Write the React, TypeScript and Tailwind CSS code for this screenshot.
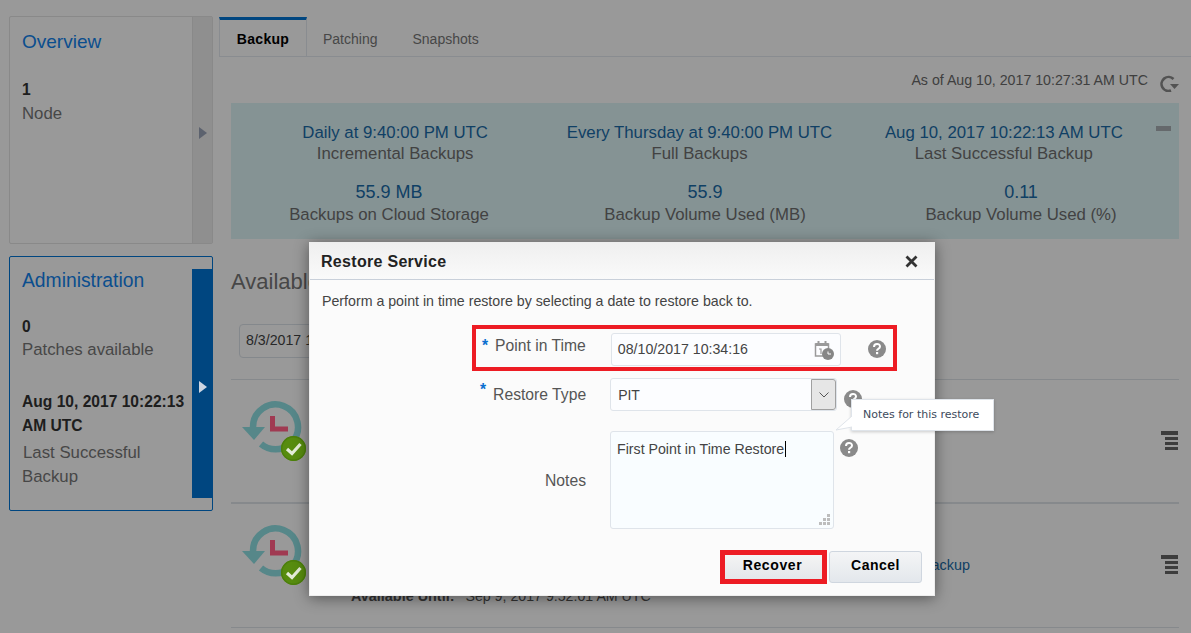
const arial = { fontFamily: '"Liberation Sans", Arial, sans-serif' };

function Help() {
  return (
    <svg width="18" height="18" viewBox="0 0 18 18" className="shrink-0">
      <circle cx="9" cy="9" r="9" fill="#8a8a8a" />
      <path d="M6 7c0-4 6-4 6-.6 0 2.300-3 2.300-3 4.300" fill="none" stroke="#fff" strokeWidth="2" />
      <rect x="8" y="12" width="2.200" height="2.200" fill="#fff" />
    </svg>
  );
}

function BackupIcon() {
  return (
    <svg width="66" height="66" viewBox="0 0 66 66" className="relative z-20 shrink-0">
      <path d="M13 28 A22.500 22.500 0 1 1 52 43.300" fill="none" stroke="#568789" strokeWidth="6.500" />
      <path d="M21 45 A22.500 22.500 0 0 0 50 45" fill="none" stroke="#568789" strokeWidth="6.500" />
      <path d="M2 28 H25 L14 41 Z" fill="#568789" />
      <path d="M32.500 17 V30 H48" fill="none" stroke="#a03a52" strokeWidth="5" />
      <circle cx="53.500" cy="49.500" r="12.500" fill="#578c0f" />
      <circle cx="53.500" cy="49.500" r="11.800" fill="none" stroke="#4c7f0c" strokeWidth="1.400" />
      <path d="M47 50 L52 54.500 L60.500 45" fill="none" stroke="#e4ecd8" strokeWidth="3.200" />
    </svg>
  );
}

function Menu() {
  return (
    <div className="flex w-[17px] flex-col items-end gap-[2px]">
      <div className="h-[4px] w-[17px] bg-[#666666]" />
      <div className="h-[3px] w-[13px] bg-[#666666]" />
      <div className="h-[3px] w-[13px] bg-[#666666]" />
      <div className="h-[3px] w-[13px] bg-[#666666]" />
    </div>
  );
}

function Stat({ top, sub, low }: { top: string; sub: string; low?: boolean }) {
  return (
    <div className="text-center text-[16.8px] leading-[21px]">
      <div className={low ? "text-[18px] text-[#1a6ba8]" : "text-[#1a6ba8]"}>{top}</div>
      <div className={low ? "mt-[1px] text-[#6f6f6f]" : "text-[#6f6f6f]"}>{sub}</div>
    </div>
  );
}

function Row({ children, tall }: { children?: React.ReactNode; tall?: boolean }) {
  return (
    <div className={`flex h-[124px] items-start border-b border-[#dfe4ea] ${tall ? "border-b-2" : ""}`}>
      <div className="mt-[19px] ml-[9px]"><BackupIcon /></div>
      <div className="flex h-full flex-1 flex-col justify-end pb-[22px] pl-[45px] text-[14.4px] text-[#555]">{children}</div>
      <div className="mt-[51px] mr-[1px]"><Menu /></div>
    </div>
  );
}

export default function App() {
  return (
    <div style={arial} className="relative flex h-[633px] w-[1191px] overflow-hidden bg-white">
      <aside className="mt-[16px] ml-[9px] flex w-[204px] shrink-0 flex-col gap-[12px]">
        <section className="flex h-[228px] rounded-[2px] border border-[#e4e4e4]">
          <div className="flex-1 pt-[12px] pl-[12px]">
            <h2 className="text-[19px] leading-[26px] text-[#1283ed]">Overview</h2>
            <div className="mt-[23px] text-[15.6px] leading-[24px] font-bold text-[#333]">1</div>
            <div className="text-[16.8px] leading-[24px] text-[#777]">Node</div>
          </div>
          <div className="flex w-[20px] items-center justify-center border-l border-[#e4e4e4] bg-[#eeeeee] pt-[5px]">
            <div className="h-0 w-0 border-y-[6px] border-l-[8px] border-y-transparent border-l-[#9aa3b8]" />
          </div>
        </section>
        <section className="flex h-[255px] rounded-[2px] border border-[#0075d5]">
          <div className="flex-1 pt-[11px] pl-[12px]">
            <h2 className="text-[19.300px] leading-[26px] text-[#1283ed]">Administration</h2>
            <div className="mt-[21px] text-[15.6px] leading-[24px] font-bold text-[#333]">0</div>
            <div className="mt-[-1px] text-[16.8px] leading-[24px] text-[#777]">Patches available</div>
            <div className="mt-[28px] text-[15.6px] leading-[24px] font-bold text-[#333]">Aug 10, 2017 10:22:13 AM UTC</div>
            <div className="mt-[3px] text-[16.8px] leading-[24px] text-[#777]">
              <span className="pl-[1px]">Last Successful</span>
              <br />Backup
            </div>
          </div>
          <div className="my-[12px] mr-[-1px] flex w-[21px] shrink-0 items-center justify-center bg-[#0075d5] pt-[6px]">
            <div className="relative z-20 h-0 w-0 border-y-[6px] border-l-[8px] border-y-transparent border-l-[#cdd6e2]" />
          </div>
        </section>
      </aside>

      <main className="ml-[6px] flex-1 pt-[17px]">
        <nav className="flex h-[40px] items-stretch border-b border-[#e4e9f0] text-[14px] text-[#777]">
          <div className="flex w-[88px] items-center justify-center border-x border-t-[3px] border-x-[#e4e9f0] border-t-[#0075d5] pt-[3px] font-bold tracking-[0.3px] text-black">Backup</div>
          <div className="ml-[16px] flex items-center pt-[6px]">Patching</div>
          <div className="ml-[35px] flex items-center pt-[6px]">Snapshots</div>
        </nav>
        <div className="mt-[14px] mr-[13px] flex h-[20px] items-center justify-end text-[14.2px] text-[#6a6a6a]">
          <span>As of Aug 10, 2017 10:27:31 AM UTC</span>
          <svg width="20" height="20" viewBox="0 0 20 20" className="mt-[1px] mr-[-1px] ml-[11px]">
            <path d="M14.500 7A7 7 0 1 0 12 18.500" fill="none" stroke="#8a8a8a" strokeWidth="2.600" />
            <path d="M11 12h9l-4.500 5z" fill="#8a8a8a" />
          </svg>
        </div>
        <section className="relative mx-[12px] mt-[12px] h-[136px] bg-[#def5f7] pt-[19px]">
          <div className="grid grid-cols-3 pr-[23px] pl-[12px]">
            <Stat top="Daily at 9:40:00 PM UTC" sub="Incremental Backups" />
            <Stat top="Every Thursday at 9:40:00 PM UTC" sub="Full Backups" />
            <Stat top="Aug 10, 2017 10:22:13 AM UTC" sub="Last Successful Backup" />
          </div>
          <div className="mt-[18px] grid grid-cols-3">
            <Stat low top="55.9 MB" sub="Backups on Cloud Storage" />
            <Stat low top="55.9" sub="Backup Volume Used (MB)" />
            <Stat low top="0.11" sub="Backup Volume Used (%)" />
          </div>
          <div className="absolute top-[23px] right-[8px] h-[5px] w-[15px] bg-[#a8b0b4]" />
        </section>
        <div className="mx-[12px]">
          <h3 className="mt-[27px] text-[22px] leading-[32px] text-[#777]">Available Backups</h3>
          <div className="mt-[26px] ml-[8px] flex h-[34px] w-[200px] items-center rounded-[4px] border border-[#dde3ea] pl-[6px] text-[14.2px] text-[#444]">8/3/2017 12:00:00 AM</div>
          <div className="mt-[21px] border-t border-[#dfe4ea]">
            <Row tall />
            <Row>
              <div className="flex justify-end pr-[191px] text-[#1a6ba8]">Backup</div>
              <div className="mt-[7px] flex translate-y-[3px] gap-[11px]">
                <b>Available Until:</b>
                <span className="text-[14.2px]">Sep 9, 2017 9:52:01 AM UTC</span>
              </div>
            </Row>
          </div>
        </div>
      </main>

      <div className="absolute inset-0 bg-black/40" />

      <div className="absolute top-[242px] left-[309px] z-30 flex h-[354px] w-[626px] flex-col border border-[#eeeeee] bg-[#fbfbfb] shadow-[0_2px_14px_rgba(0,0,0,0.45)]">
        <header className="flex h-[37px] shrink-0 items-center justify-between border-b border-[#c9d0da] bg-gradient-to-b from-[#efefef] to-[#fafafa] pr-[16px] pl-[11px]">
          <h2 className="pt-[2px] text-[16px] font-bold tracking-[0.3px] text-[#222]">Restore Service</h2>
          <svg width="13" height="13" viewBox="0 0 13 13"><path d="M1.500 1.500l10 10m0-10l-10 10" stroke="#333" strokeWidth="2.800" /></svg>
        </header>
        <p className="mt-[12px] ml-[12px] text-[14.2px] leading-[18px] text-[#444]">Perform a point in time restore by selecting a date to restore back to.</p>

        <div className="relative mt-[15px] ml-[162px] flex h-[46px] w-[425px] items-center border-[4px] border-[#ed1c24]">
          <span className="mt-[-4px] ml-[6px] text-[15.7px] font-bold text-[#0b6fd0]">*</span>
          <span className="mt-[-4px] ml-[7px] text-[15.7px] text-[#555]">Point in Time</span>
          <div className="mt-[3px] ml-[25px] flex h-[33px] w-[230px] items-center justify-between rounded-[3px] border border-[#dfe4ea] bg-[#fcfdff] px-[6px] text-[14.2px] text-[#444]">
            08/10/2017 10:34:16
            <svg width="20" height="20" viewBox="0 0 20 20">
              <path d="M1.500 4h13v12h-13z" fill="none" stroke="#9a9a9a" strokeWidth="1.500" />
              <path d="M1.500 3h13v3h-13zM3.500 1h2v3h-2zM10.500 1h2v3h-2z" fill="#9a9a9a" />
              <path d="M5 9h2v5" fill="none" stroke="#9a9a9a" strokeWidth="1.200" />
              <circle cx="14" cy="14" r="6" fill="#868686" />
              <path d="M14 11.500V14h3" fill="none" stroke="#fff" strokeWidth="1" />
            </svg>
          </div>
          <div className="mt-[2px] ml-[27px]"><Help /></div>
        </div>

        <div className="relative mt-[7px] flex h-[33px] items-center">
          <span className="mt-[-9px] ml-[170px] text-[15.7px] font-bold text-[#0b6fd0]">*</span>
          <span className="ml-[7px] text-[15.7px] text-[#555]">Restore Type</span>
          <div className="ml-[24px] flex h-[33px] w-[227px] items-center rounded-[3px] border border-[#dfe4ea] bg-[#fcfdff] pl-[7px] text-[14px] text-[#444]">
            <span className="flex-1 pt-[2px]">PIT</span>
            <div className="flex h-full w-[25px] items-center justify-center rounded-r-[3px] border border-[#a0a0a0] bg-[#e6e6e6]">
              <svg width="10" height="6" viewBox="0 0 10 6"><path d="M.5.500L5 5l4.500-4.500" fill="none" stroke="#555" /></svg>
            </div>
          </div>
          <div className="mt-[8px] ml-[7px]"><Help /></div>
          <div className="absolute top-[21px] left-[541px] z-10 flex h-[32px] w-[143px] items-center border border-[#dfe4ea] bg-white pl-[11px] text-[11px] whitespace-nowrap text-[#3d4a5c] shadow-[0_1px_3px_rgba(0,0,0,0.2)]" style={{ fontFamily: '"DejaVu Sans", sans-serif' }}>
            Notes for this restore
            <svg width="18" height="16" viewBox="0 0 18 16" className="absolute top-[15px] left-[-17px]">
              <path d="M17 1L1 15 17 12" fill="#fff" stroke="#dfe4ea" />
            </svg>
          </div>
        </div>

        <div className="mt-[20px] flex h-[98px] items-start">
          <span className="mt-[40px] ml-[235px] w-[65px] text-[15.7px] leading-[20px] text-[#555]">Notes</span>
          <div className="relative h-[98px] w-[224px] rounded-[3px] border border-[#dfe4ea] bg-[#f9fdff] pt-[6px] pl-[6px] text-[14.2px] leading-[18px] text-[#444]">
            First Point in Time Restore<span className="ml-[1px] inline-block h-[16px] w-[1px] translate-y-[3px] bg-black" />
            <svg width="12" height="12" viewBox="0 0 12 12" className="absolute right-[2px] bottom-[2px]">
              <path d="M8 0h3v3H8zM4 4h3v3H4zM8 4h3v3H8zM0 8h3v3H0zM4 8h3v3H4zM8 8h3v3H8z" fill="#bdbdbd" />
            </svg>
          </div>
          <div className="mt-[8px] ml-[6px]"><Help /></div>
        </div>

        <footer className="mt-[21px] ml-[410px] flex items-center gap-[2px] text-[14px] font-bold tracking-[0.6px] text-black">
          <button className="h-[34px] w-[107px] border-[5px] border-[#ed1c24] bg-gradient-to-b from-[#f4f4f4] to-[#e4e7ea] pr-[2px] pb-[4px]">Recover</button>
          <button className="h-[32px] w-[93px] rounded-[3px] border border-[#cfd6df] bg-gradient-to-b from-[#f4f5f6] to-[#e3e7ec] pb-[4px] tracking-[0.5px]">Cancel</button>
        </footer>
      </div>
    </div>
  );
}
